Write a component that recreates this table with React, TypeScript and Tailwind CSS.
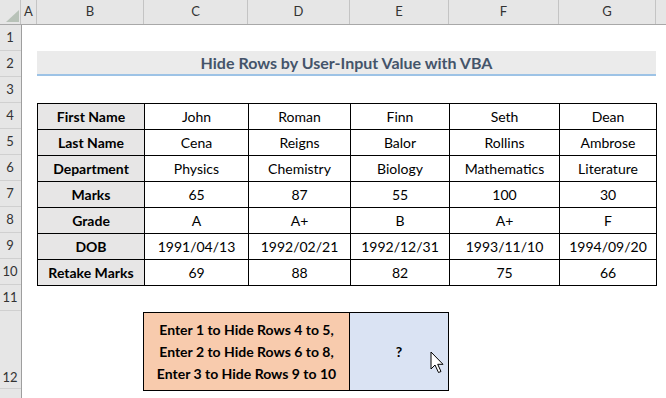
import React from 'react';

const cols = [
  { name: 'A', w: 'w-[16px]' },
  { name: 'B', w: 'w-[107px]' },
  { name: 'C', w: 'w-[104px]' },
  { name: 'D', w: 'w-[102px]' },
  { name: 'E', w: 'w-[99px]' },
  { name: 'F', w: 'w-[110px]' },
  { name: 'G', w: 'w-[97px]' },
];

const rows: string[][] = [
  ['First Name', 'John', 'Roman', 'Finn', 'Seth', 'Dean'],
  ['Last Name', 'Cena', 'Reigns', 'Balor', 'Rollins', 'Ambrose'],
  ['Department', 'Physics', 'Chemistry', 'Biology', 'Mathematics', 'Literature'],
  ['Marks', '65', '87', '55', '100', '30'],
  ['Grade', 'A', 'A+', 'B', 'A+', 'F'],
  ['DOB', '1991/04/13', '1992/02/21', '1992/12/31', '1993/11/10', '1994/09/20'],
  ['Retake Marks', '69', '88', '82', '75', '66'],
];

const cellW = ['w-[107px]', 'w-[104px]', 'w-[102px]', 'w-[99px]', 'w-[110px]', 'w-[97px]'];

const RowNum = ({ n, tall }: { n: number; tall?: boolean }) => (
  <div
    className={`flex w-[21px] justify-center border-b border-[#d0d0d0] pr-[1px] text-[13px] text-[#333] ${tall ? 'h-[78px] items-end pb-[1px]' : 'h-[26px] items-center'}`}
  >
    {n}
  </div>
);

const Cursor = () => (
  <svg className="absolute left-[80px] top-[38px]" width="16" height="24" viewBox="0 0 16 24">
    <path
      d="M1 1 L1 18 L5 14 L8.5 21.5 L11 20.5 L7.7 13.3 L13 13.3 Z"
      fill="#fff"
      stroke="#000"
      strokeWidth="1"
      strokeLinejoin="miter"
    />
  </svg>
);

export default function App() {
  return (
    <div className="h-[398px] w-[666px] overflow-hidden bg-white font-['Lato','Open_Sans',sans-serif] text-black">
      {/* column headers */}
      <div className="flex h-[25px] border-b border-[#a8a8a8] bg-[#e6e6e6]">
        <div className="relative w-[21px] border-r border-[#c4c4c4]">
          <svg className="absolute left-[6px] top-[10px]" width="13" height="12" viewBox="0 0 13 12">
            <polygon points="13,0 13,12 0,12" fill="#b8c2b8" />
          </svg>
        </div>
        {cols.map((c) => (
          <div
            className={`${c.w} flex items-center justify-center border-r border-[#c4c4c4] text-[13px] text-[#333]`}
            key={c.name}
          >
            {c.name}
          </div>
        ))}
        <div className="flex-1" />
      </div>

      <div className="flex">
        {/* row headers */}
        <div className="flex h-[373px] w-[22px] flex-col border-r border-[#9e9e9e] bg-[#e6e6e6]">
          {Array.from({ length: 11 }, (_, i) => (
            <RowNum key={i} n={i + 1} />
          ))}
          <RowNum n={12} tall />
        </div>

        {/* sheet body */}
        <div className="flex flex-col items-start pl-[15px]">
          <div className="h-[26px]" />
          <div className="flex h-[26px]">
            <div className="flex h-[25px] w-[619px] items-center justify-center border-b-2 border-[#9dc3e6] bg-[#ebebeb] text-[16px] font-bold text-[#44546a]">
              Hide Rows by User-Input Value with VBA
            </div>
          </div>
          <div className="h-[26px]" />

          <div className="flex w-[620px] flex-col border-l border-t border-black">
            {rows.map((r, i) => (
              <div className="flex h-[26px]" key={i}>
                {r.map((v, j) => (
                  <div
                    className={`${cellW[j]} flex items-center justify-center border-b border-r border-black text-[14px] ${j === 0 ? 'bg-[#e7e6e6] font-bold' : ''}`}
                    key={j}
                  >
                    {v}
                  </div>
                ))}
              </div>
            ))}
          </div>

          <div className="h-[26px]" />

          <div className="ml-[106px] flex h-[79px] border border-black">
            <div className="flex w-[206px] flex-col items-center justify-center border-r border-black bg-[#f8cbad] text-[14px] font-bold leading-[22px]">
              <span>Enter 1 to Hide Rows 4 to 5,</span>
              <span>Enter 2 to Hide Rows 6 to 8,</span>
              <span>Enter 3 to Hide Rows 9 to 10</span>
            </div>
            <div className="relative flex w-[98px] items-center justify-center bg-[#dae3f3] text-[14px] font-bold">
              ?
              <Cursor />
            </div>
          </div>
        </div>
      </div>
    </div>
  );
}
